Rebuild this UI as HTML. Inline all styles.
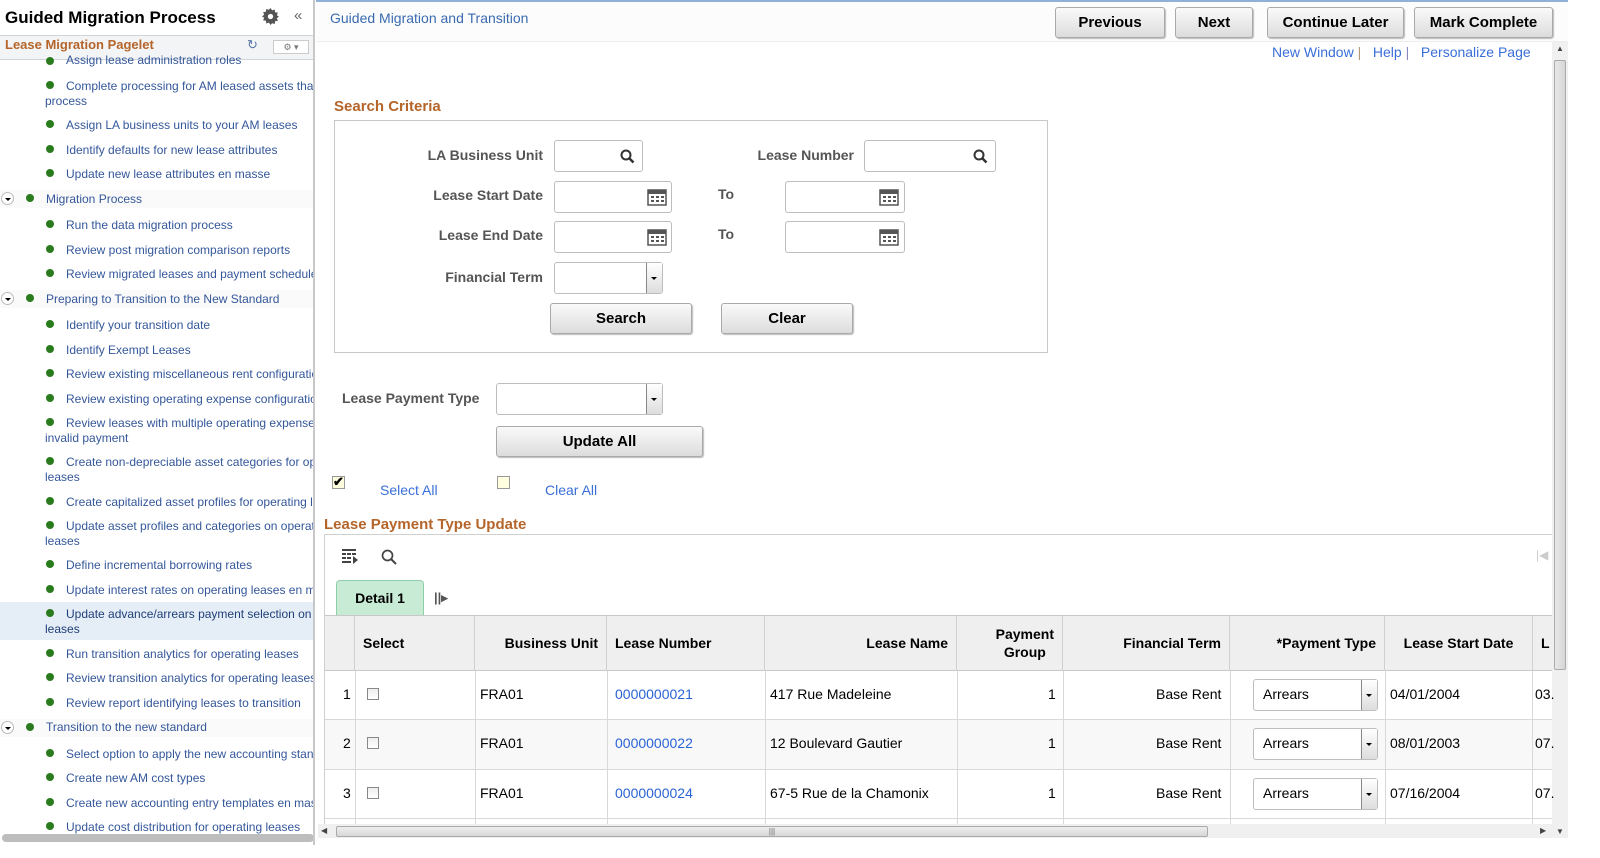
<!DOCTYPE html>
<html><head><meta charset="utf-8"><style>
*{box-sizing:border-box;margin:0;padding:0}
body{width:1600px;height:858px;overflow:hidden;background:#fff;font-family:"Liberation Sans",Arial,sans-serif;position:relative}
.a{position:absolute;white-space:nowrap}
.side{position:absolute;left:0;top:0;width:315px;height:845px;border-right:2px solid #c8c8c8;overflow:hidden;background:#fff}
.it{position:absolute;font-size:12px;color:#34579a;white-space:nowrap}
.dot{position:absolute;width:8px;height:8px;border-radius:50%;background:#2a7a1e}
.tg{position:absolute;left:1px;width:13px;height:13px;border:1px solid #bbb;border-radius:50%;background:#fff}
.tg:after{content:"";position:absolute;left:3px;top:5px;border-left:3px solid transparent;border-right:3px solid transparent;border-top:3px solid #000}
.btn{position:absolute;height:31px;border:1px solid #a9a9a9;border-radius:3px;background:linear-gradient(#fafafa,#dcdcdc);font-weight:bold;font-size:15px;text-align:center;line-height:29px;color:#000;box-shadow:1px 1px 1px #bbb}
.lbl{position:absolute;font-size:14px;font-weight:bold;color:#555;text-align:right;white-space:nowrap}
.inp{position:absolute;height:32px;border:1px solid #bdbdbd;border-radius:3px;background:#fff}
.lnk{color:#3a6fd8}
.dd{position:absolute;right:0;top:0;width:16px;height:100%;border-left:1px solid #888;background:linear-gradient(#fff,#ddd)}
.dd:after{content:"";position:absolute;left:4px;top:45%;border-left:3px solid transparent;border-right:3px solid transparent;border-top:3px solid #000}
.th{position:absolute;top:615px;height:56px;font-size:14px;font-weight:bold;border-right:1px solid #d0d0d0;display:flex;align-items:center;padding:0 8px;line-height:18px}
.td{position:absolute;font-size:14px;color:#000;white-space:nowrap}
.td.lnk{color:#2a63d6}
</style></head><body>

<div class="side">
 <div class="a" style="left:5px;top:8px;font-size:17px;font-weight:bold">Guided Migration Process</div>
 <svg class="a" style="left:262px;top:8px" width="17" height="17" viewBox="0 0 16 16"><path fill="#555" d="M8 0l1.5 2.2 2.5-.8.3 2.6 2.6.4-.9 2.5L16 8l-2 1.6.9 2.5-2.6.4-.3 2.6-2.5-.8L8 16l-1.5-2.2-2.5.8-.3-2.6-2.6-.4.9-2.5L0 8l2-1.6-.9-2.5 2.6-.4.3-2.6 2.5.8z"/><circle cx="8" cy="8" r="2.5" fill="#fff"/></svg>
 <div class="a" style="left:294px;top:7px;font-size:15px;color:#666">«</div>
 <div class="a" style="left:0;top:35px;width:315px;height:25px;background:#f2f4f6;border-top:1px solid #cfd4da;border-bottom:1px solid #cfd4da"></div>
 <div class="a" style="left:5px;top:37px;font-size:13px;font-weight:bold;color:#b5652a">Lease Migration Pagelet</div>
 <div class="a" style="left:247px;top:37px;font-size:13px;color:#5a7aa8">↻</div>
 <div class="a" style="left:273px;top:40px;width:36px;height:14px;border:1px solid #ccc;background:#fff;font-size:9px;color:#777;text-align:center;line-height:12px">⚙ ▾</div>

 <div class="a" style="left:0;top:602px;width:315px;height:38px;background:#e5edf6"></div>
 <div class="a" style="left:0;top:190px;width:315px;height:18px;background:#fafafa"></div>
 <div class="a" style="left:0;top:290px;width:315px;height:18px;background:#fafafa"></div>
 <div class="a" style="left:0;top:719px;width:315px;height:18px;background:#fafafa"></div>

 <div class="dot" style="left:46px;top:57px"></div><div class="it" style="left:66px;top:53px">Assign lease administration roles</div>
 <div class="dot" style="left:46px;top:81px"></div><div class="it" style="left:66px;top:79px">Complete processing for AM leased assets that</div><div class="it" style="left:45px;top:94px">process</div>
 <div class="dot" style="left:46px;top:120px"></div><div class="it" style="left:66px;top:118px">Assign LA business units to your AM leases</div>
 <div class="dot" style="left:46px;top:145px"></div><div class="it" style="left:66px;top:143px">Identify defaults for new lease attributes</div>
 <div class="dot" style="left:46px;top:169px"></div><div class="it" style="left:66px;top:167px">Update new lease attributes en masse</div>
 <div class="tg" style="top:192px"></div><div class="dot" style="left:26px;top:194px"></div><div class="it" style="left:46px;top:192px">Migration Process</div>
 <div class="dot" style="left:46px;top:220px"></div><div class="it" style="left:66px;top:218px">Run the data migration process</div>
 <div class="dot" style="left:46px;top:245px"></div><div class="it" style="left:66px;top:243px">Review post migration comparison reports</div>
 <div class="dot" style="left:46px;top:269px"></div><div class="it" style="left:66px;top:267px">Review migrated leases and payment schedules</div>
 <div class="tg" style="top:292px"></div><div class="dot" style="left:26px;top:294px"></div><div class="it" style="left:46px;top:292px">Preparing to Transition to the New Standard</div>
 <div class="dot" style="left:46px;top:320px"></div><div class="it" style="left:66px;top:318px">Identify your transition date</div>
 <div class="dot" style="left:46px;top:345px"></div><div class="it" style="left:66px;top:343px">Identify Exempt Leases</div>
 <div class="dot" style="left:46px;top:369px"></div><div class="it" style="left:66px;top:367px">Review existing miscellaneous rent configuration</div>
 <div class="dot" style="left:46px;top:394px"></div><div class="it" style="left:66px;top:392px">Review existing operating expense configuration</div>
 <div class="dot" style="left:46px;top:418px"></div><div class="it" style="left:66px;top:416px">Review leases with multiple operating expense</div><div class="it" style="left:45px;top:431px">invalid payment</div>
 <div class="dot" style="left:46px;top:457px"></div><div class="it" style="left:66px;top:455px">Create non-depreciable asset categories for op</div><div class="it" style="left:45px;top:470px">leases</div>
 <div class="dot" style="left:46px;top:497px"></div><div class="it" style="left:66px;top:495px">Create capitalized asset profiles for operating l</div>
 <div class="dot" style="left:46px;top:521px"></div><div class="it" style="left:66px;top:519px">Update asset profiles and categories on operat</div><div class="it" style="left:45px;top:534px">leases</div>
 <div class="dot" style="left:46px;top:560px"></div><div class="it" style="left:66px;top:558px">Define incremental borrowing rates</div>
 <div class="dot" style="left:46px;top:585px"></div><div class="it" style="left:66px;top:583px">Update interest rates on operating leases en m</div>
 <div class="dot" style="left:46px;top:609px"></div><div class="it" style="left:66px;top:607px;color:#1f3f78">Update advance/arrears payment selection on</div><div class="it" style="left:45px;top:622px;color:#1f3f78">leases</div>
 <div class="dot" style="left:46px;top:649px"></div><div class="it" style="left:66px;top:647px">Run transition analytics for operating leases</div>
 <div class="dot" style="left:46px;top:673px"></div><div class="it" style="left:66px;top:671px">Review transition analytics for operating leases</div>
 <div class="dot" style="left:46px;top:698px"></div><div class="it" style="left:66px;top:696px">Review report identifying leases to transition</div>
 <div class="tg" style="top:721px"></div><div class="dot" style="left:26px;top:723px"></div><div class="it" style="left:46px;top:720px">Transition to the new standard</div>
 <div class="dot" style="left:46px;top:749px"></div><div class="it" style="left:66px;top:747px">Select option to apply the new accounting standard</div>
 <div class="dot" style="left:46px;top:773px"></div><div class="it" style="left:66px;top:771px">Create new AM cost types</div>
 <div class="dot" style="left:46px;top:798px"></div><div class="it" style="left:66px;top:796px">Create new accounting entry templates en masse</div>
 <div class="dot" style="left:46px;top:822px"></div><div class="it" style="left:66px;top:820px">Update cost distribution for operating leases</div>
 <div class="a" style="left:0;top:834px;width:315px;height:8px;background:#fff"></div>
 <div class="a" style="left:2px;top:834px;width:312px;height:8px;border-radius:4px;background:#bdbdbd"></div>
</div>

<div class="a" style="left:316px;top:0;width:1252px;height:2px;background:#8fb0d8"></div>
<div class="a" style="left:316px;top:2px;width:1252px;height:40px;background:#fcfcfc;border-bottom:1px solid #eee"></div>
<div class="a" style="left:330px;top:10px;font-size:14px;color:#3a6bb0">Guided Migration and Transition</div>
<div class="btn" style="left:1055px;top:7px;width:110px">Previous</div>
<div class="btn" style="left:1175px;top:7px;width:78px">Next</div>
<div class="btn" style="left:1267px;top:7px;width:137px">Continue Later</div>
<div class="btn" style="left:1414px;top:7px;width:139px">Mark Complete</div>
<div class="a lnk" style="left:1272px;top:44px;font-size:14px">New Window <span style="color:#b59a7a">|</span> &nbsp;&nbsp;Help <span style="color:#8a8ac0">|</span> &nbsp;&nbsp;Personalize Page</div>

<div class="a" style="left:1552px;top:42px;width:16px;height:796px;background:#f0f0f0"></div>
<div class="a" style="left:1554px;top:60px;width:12px;height:610px;background:linear-gradient(90deg,#e8e8e8,#d6d6d6);border:1px solid #aaa;border-radius:2px"></div>
<div class="a" style="left:1556px;top:44px;font-size:8px;color:#444">▲</div>
<div class="a" style="left:1556px;top:827px;font-size:8px;color:#444">▼</div>

<div class="a" style="left:334px;top:98px;font-size:15px;font-weight:bold;color:#b5652a">Search Criteria</div>
<div class="a" style="left:334px;top:120px;width:714px;height:233px;border:1px solid #c8c8c8"></div>
<div class="lbl" style="left:380px;top:147px;width:163px">LA Business Unit</div>
<div class="inp" style="left:554px;top:140px;width:89px"><svg class="a" style="right:7px;top:8px" width="15" height="15" viewBox="0 0 15 15"><circle cx="6" cy="6" r="4.5" fill="none" stroke="#333" stroke-width="2"/><path d="M9.5 9.5l4 4" stroke="#333" stroke-width="2.5"/></svg></div>
<div class="lbl" style="left:700px;top:147px;width:154px">Lease Number</div>
<div class="inp" style="left:864px;top:140px;width:132px"><svg class="a" style="right:7px;top:8px" width="15" height="15" viewBox="0 0 15 15"><circle cx="6" cy="6" r="4.5" fill="none" stroke="#333" stroke-width="2"/><path d="M9.5 9.5l4 4" stroke="#333" stroke-width="2.5"/></svg></div>
<div class="lbl" style="left:380px;top:187px;width:163px">Lease Start Date</div>
<div class="inp" style="left:554px;top:181px;width:118px"></div>
<div class="lbl" style="left:718px;top:186px">To</div>
<div class="inp" style="left:785px;top:181px;width:120px"></div>
<div class="lbl" style="left:380px;top:227px;width:163px">Lease End Date</div>
<div class="inp" style="left:554px;top:221px;width:118px"></div>
<div class="lbl" style="left:718px;top:226px">To</div>
<div class="inp" style="left:785px;top:221px;width:120px"></div>
<svg class="a" style="left:647px;top:187px" width="20" height="19" viewBox="0 0 20 19"><rect x="1" y="3" width="18" height="15" fill="#fff" stroke="#555" stroke-width="1.5"/><rect x="1" y="3" width="18" height="4" fill="#555"/><g fill="#555"><rect x="4" y="9" width="3" height="2"/><rect x="9" y="9" width="3" height="2"/><rect x="14" y="9" width="3" height="2"/><rect x="4" y="13" width="3" height="2"/><rect x="9" y="13" width="3" height="2"/><rect x="14" y="13" width="3" height="2"/></g></svg>
<svg class="a" style="left:879px;top:187px" width="20" height="19" viewBox="0 0 20 19"><rect x="1" y="3" width="18" height="15" fill="#fff" stroke="#555" stroke-width="1.5"/><rect x="1" y="3" width="18" height="4" fill="#555"/><g fill="#555"><rect x="4" y="9" width="3" height="2"/><rect x="9" y="9" width="3" height="2"/><rect x="14" y="9" width="3" height="2"/><rect x="4" y="13" width="3" height="2"/><rect x="9" y="13" width="3" height="2"/><rect x="14" y="13" width="3" height="2"/></g></svg>
<svg class="a" style="left:647px;top:227px" width="20" height="19" viewBox="0 0 20 19"><rect x="1" y="3" width="18" height="15" fill="#fff" stroke="#555" stroke-width="1.5"/><rect x="1" y="3" width="18" height="4" fill="#555"/><g fill="#555"><rect x="4" y="9" width="3" height="2"/><rect x="9" y="9" width="3" height="2"/><rect x="14" y="9" width="3" height="2"/><rect x="4" y="13" width="3" height="2"/><rect x="9" y="13" width="3" height="2"/><rect x="14" y="13" width="3" height="2"/></g></svg>
<svg class="a" style="left:879px;top:227px" width="20" height="19" viewBox="0 0 20 19"><rect x="1" y="3" width="18" height="15" fill="#fff" stroke="#555" stroke-width="1.5"/><rect x="1" y="3" width="18" height="4" fill="#555"/><g fill="#555"><rect x="4" y="9" width="3" height="2"/><rect x="9" y="9" width="3" height="2"/><rect x="14" y="9" width="3" height="2"/><rect x="4" y="13" width="3" height="2"/><rect x="9" y="13" width="3" height="2"/><rect x="14" y="13" width="3" height="2"/></g></svg>
<div class="lbl" style="left:380px;top:269px;width:163px">Financial Term</div>
<div class="inp" style="left:554px;top:262px;width:109px"><div class="dd"></div></div>
<div class="btn" style="left:550px;top:303px;width:142px">Search</div>
<div class="btn" style="left:721px;top:303px;width:132px">Clear</div>

<div class="lbl" style="left:342px;top:390px">Lease Payment Type</div>
<div class="inp" style="left:496px;top:383px;width:167px"><div class="dd"></div></div>
<div class="btn" style="left:496px;top:426px;width:207px">Update All</div>
<div class="a" style="left:332px;top:476px;width:13px;height:13px;border:1px solid #999;background:#ffffe0;font-size:13px;line-height:10px;font-weight:bold">✔</div>
<div class="a lnk" style="left:380px;top:482px;font-size:14px">Select All</div>
<div class="a" style="left:497px;top:476px;width:13px;height:13px;border:1px solid #999;background:#ffffe0"></div>
<div class="a lnk" style="left:545px;top:482px;font-size:14px">Clear All</div>

<div class="a" style="left:324px;top:516px;font-size:15px;font-weight:bold;color:#b5652a">Lease Payment Type Update</div>
<div class="a" style="left:324px;top:534px;width:1228px;height:300px;border:1px solid #d0d0d0;border-right:none"></div>
<svg class="a" style="left:342px;top:548px" width="17" height="16" viewBox="0 0 17 16"><g fill="#444"><rect x="0" y="1" width="14" height="2"/><rect x="0" y="5" width="4" height="2"/><rect x="5" y="5" width="4" height="2"/><rect x="10" y="5" width="4" height="2"/><rect x="0" y="9" width="4" height="2"/><rect x="5" y="9" width="4" height="2"/><rect x="0" y="13" width="9" height="2"/><path d="M11 8l5 4-5 4z"/></g></svg>
<svg class="a" style="left:381px;top:549px" width="16" height="16" viewBox="0 0 16 16"><circle cx="6.5" cy="6.5" r="5" fill="none" stroke="#444" stroke-width="1.7"/><path d="M10 10l5 5" stroke="#444" stroke-width="2"/></svg>
<div class="a" style="left:1536px;top:548px;font-size:12px;color:#ccc">|◀</div>
<div class="a" style="left:336px;top:580px;width:88px;height:36px;background:#c8ebd6;border:1px solid #8fcfa8;border-bottom:none;border-radius:4px 4px 0 0;font-weight:bold;font-size:14px;text-align:center;line-height:34px">Detail 1</div>
<div class="a" style="left:434px;top:590px;font-size:13px;color:#555;font-weight:bold">||▸</div>

<div class="a" style="left:325px;top:615px;width:1227px;height:56px;background:#efefef;border-top:1px solid #c8c8c8;border-bottom:1px solid #c8c8c8"></div>
<div class="th" style="left:325px;width:30px"></div>
<div class="th" style="left:355px;width:120px">Select</div>
<div class="th" style="left:475px;width:132px;justify-content:flex-end">Business Unit</div>
<div class="th" style="left:607px;width:158px">Lease Number</div>
<div class="th" style="left:765px;width:192px;justify-content:flex-end">Lease Name</div>
<div class="th" style="left:957px;width:106px;justify-content:flex-end;text-align:center">Payment<br>Group</div>
<div class="th" style="left:1063px;width:167px;justify-content:flex-end">Financial Term</div>
<div class="th" style="left:1230px;width:155px;justify-content:flex-end">*Payment Type</div>
<div class="th" style="left:1385px;width:148px;justify-content:center">Lease Start Date</div>
<div class="th" style="left:1533px;width:19px;border:none">L</div>

<div class="a" style="left:325px;top:719px;width:1227px;height:50px;background:#f8f8f8"></div>
<div class="a" style="left:325px;top:719px;width:1227px;height:1px;background:#d8d8d8"></div>
<div class="a" style="left:325px;top:769px;width:1227px;height:1px;background:#d8d8d8"></div>
<div class="a" style="left:325px;top:818px;width:1227px;height:1px;background:#d8d8d8"></div>
<div class="a" style="left:355px;top:671px;width:1px;height:153px;background:#d8d8d8"></div>
<div class="a" style="left:475px;top:671px;width:1px;height:153px;background:#d8d8d8"></div>
<div class="a" style="left:607px;top:671px;width:1px;height:153px;background:#d8d8d8"></div>
<div class="a" style="left:765px;top:671px;width:1px;height:153px;background:#d8d8d8"></div>
<div class="a" style="left:957px;top:671px;width:1px;height:153px;background:#d8d8d8"></div>
<div class="a" style="left:1063px;top:671px;width:1px;height:153px;background:#d8d8d8"></div>
<div class="a" style="left:1230px;top:671px;width:1px;height:153px;background:#d8d8d8"></div>
<div class="a" style="left:1385px;top:671px;width:1px;height:153px;background:#d8d8d8"></div>
<div class="a" style="left:1532px;top:671px;width:1px;height:153px;background:#d8d8d8"></div>

<div class="td" style="left:343px;top:686px">1</div>
<div class="a" style="left:367px;top:688px;width:12px;height:12px;border:1px solid #888;background:linear-gradient(#eee,#fff)"></div>
<div class="td" style="left:480px;top:686px">FRA01</div>
<div class="td lnk" style="left:615px;top:686px">0000000021</div>
<div class="td" style="left:770px;top:686px">417 Rue Madeleine</div>
<div class="td" style="left:1048px;top:686px">1</div>
<div class="td" style="left:1156px;top:686px">Base Rent</div>
<div class="inp" style="left:1253px;top:679px;width:125px"><span class="td" style="left:9px;top:6px">Arrears</span><div class="dd"></div></div>
<div class="td" style="left:1390px;top:686px">04/01/2004</div>
<div class="td" style="left:1535px;top:686px">03.</div>

<div class="td" style="left:343px;top:735px">2</div>
<div class="a" style="left:367px;top:737px;width:12px;height:12px;border:1px solid #888;background:linear-gradient(#eee,#fff)"></div>
<div class="td" style="left:480px;top:735px">FRA01</div>
<div class="td lnk" style="left:615px;top:735px">0000000022</div>
<div class="td" style="left:770px;top:735px">12 Boulevard Gautier</div>
<div class="td" style="left:1048px;top:735px">1</div>
<div class="td" style="left:1156px;top:735px">Base Rent</div>
<div class="inp" style="left:1253px;top:728px;width:125px"><span class="td" style="left:9px;top:6px">Arrears</span><div class="dd"></div></div>
<div class="td" style="left:1390px;top:735px">08/01/2003</div>
<div class="td" style="left:1535px;top:735px">07.</div>

<div class="td" style="left:343px;top:785px">3</div>
<div class="a" style="left:367px;top:787px;width:12px;height:12px;border:1px solid #888;background:linear-gradient(#eee,#fff)"></div>
<div class="td" style="left:480px;top:785px">FRA01</div>
<div class="td lnk" style="left:615px;top:785px">0000000024</div>
<div class="td" style="left:770px;top:785px">67-5 Rue de la Chamonix</div>
<div class="td" style="left:1048px;top:785px">1</div>
<div class="td" style="left:1156px;top:785px">Base Rent</div>
<div class="inp" style="left:1253px;top:778px;width:125px"><span class="td" style="left:9px;top:6px">Arrears</span><div class="dd"></div></div>
<div class="td" style="left:1390px;top:785px">07/16/2004</div>
<div class="td" style="left:1535px;top:785px">07.</div>

<div class="a" style="left:318px;top:824px;width:1234px;height:14px;background:#f0f0f0"></div>
<div class="a" style="left:336px;top:826px;width:872px;height:11px;background:linear-gradient(#eee,#d8d8d8);border:1px solid #aaa;border-radius:2px;font-size:8px;text-align:center;line-height:9px;color:#666">|||</div>
<div class="a" style="left:321px;top:826px;font-size:8px;color:#444">◀</div>
<div class="a" style="left:1540px;top:826px;font-size:8px;color:#444">▶</div>
</body></html>
